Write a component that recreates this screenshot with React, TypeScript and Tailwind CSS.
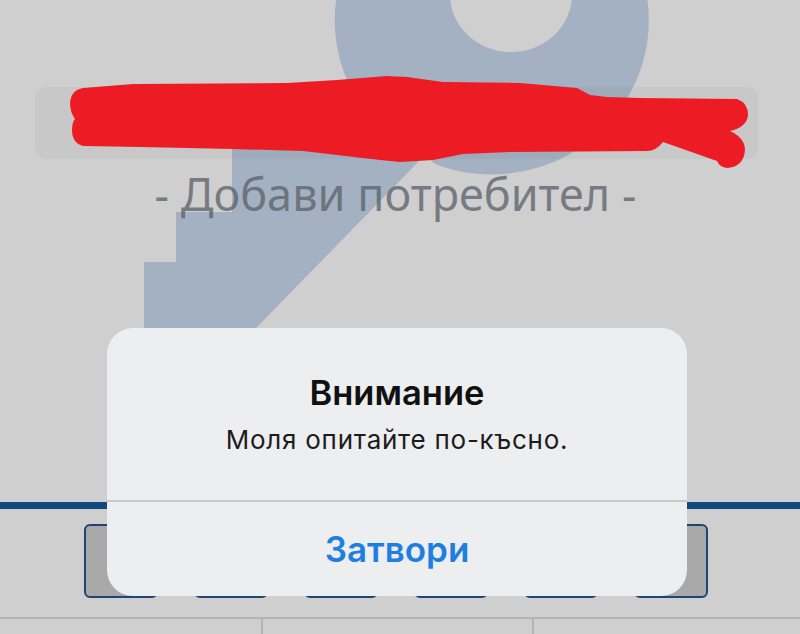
export default function App() {
  const boxes = [0, 1, 2, 3, 4, 5];
  return (
    <div className="relative w-[800px] h-[634px] overflow-hidden bg-[#cfcfcf] flex flex-col font-['Inter','Noto_Sans',sans-serif]">
      {/* key watermark */}
      <svg className="absolute left-0 top-0" width="800" height="634" viewBox="0 0 800 634">
        <path
          fillRule="evenodd"
          fill="#a3b1c2"
          d="M347 80 A157 154 0 1 1 435 164 L425 155 L256 328 L144 328 L144 262 L176 262 L176 212 L232 212 L232 140 Z M450 -5 A61 57 0 0 0 572 -5 A61 57 0 0 0 450 -5 Z"
        />
      </svg>

      {/* content */}
      <div className="relative flex flex-col h-full">
        <div className="ml-[35px] mt-[87px] w-[723px] h-[72px] rounded-[10px] bg-black/[0.03]" />
        <div className="mt-[9px] h-[52px] pr-[9px] text-center text-[45px] leading-[52px] text-[#5a6068]/75 font-['Noto_Sans',sans-serif]">
          - Добави потребител -
        </div>
        <div className="mt-[282px] h-[7px] bg-[#124a80]" />
        <div className="mt-[15px] ml-[84px] flex gap-[36px]">
          {boxes.map((b) => (
            <div key={b} className="w-[74px] h-[74px] rounded-[6px] border-2 border-[#1d4673] bg-[#a9a9a9]" />
          ))}
        </div>
        <div className="mt-[19px] flex-1 border-t-2 border-[#b5b5b5] flex">
          <div className="w-[263px] border-r-2 border-[#b5b5b5]" />
          <div className="w-[271px] border-r-2 border-[#b5b5b5]" />
        </div>
      </div>

      {/* red scribble */}
      <svg className="absolute left-0 top-0" width="800" height="634" viewBox="0 0 800 634">
        <path
          fill="#ed1c24"
          d="M83 88 L133 84 L287 83 L337 80 L387 76 L407 77 L443 82 L520 83 L577 88 L590 95 L607 97 L640 98 L737 99 Q748 103 748 115 Q747 127 730 131 Q745 138 745 150 Q744 166 728 168 Q720 168 717 161 L663 142 Q656 151 647 151 L510 152 L463 154 L433 160 L400 162 L380 160 L303 151 L233 149 L140 147 L83 146 Q72 143 72 130 Q72 122 75 119 Q70 112 70 103 Q71 90 83 88 Z"
        />
      </svg>

      {/* alert */}
      <div className="absolute left-[107px] top-[328px] w-[580px] h-[268px] rounded-[26px] bg-[#edeef0] flex flex-col">
        <div className="h-[172px] flex flex-col items-center pt-[45px]">
          <div className="text-[34.5px] leading-[40px] font-semibold text-[#111111]">Внимание</div>
          <div className="mt-[11px] text-[26px] leading-[32px] tracking-[0.75px] text-[#1c1c1c]">Моля опитайте по-късно.</div>
        </div>
        <div className="h-[2px] bg-[#c9c9c9]" />
        <div className="flex-1 flex items-center justify-center text-[35px] font-semibold text-[#1f7fe0]">Затвори</div>
      </div>
    </div>
  );
}
